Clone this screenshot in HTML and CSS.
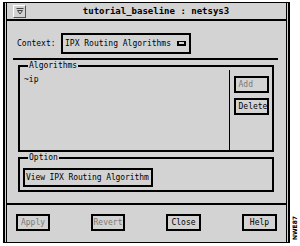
FILE: index.html
```html
<!DOCTYPE html>
<html lang="en">
<head>
    <meta charset="UTF-8">
    <title>tutorial_baseline : netsys3</title>
    <link rel="stylesheet" href="styles.css">
</head>
<body>
    <div class="screen">
        <div class="window">
            <div class="frame">
                <div class="titlebar">
                    <span class="menu-btn">
                        <svg width="8" height="7" viewBox="0 0 8 7">
                            <path d="M0.5 0.5 H7.5 M1.5 2.5 H6.5 L4 6 Z" fill="none" stroke="#444" stroke-width="1"/>
                        </svg>
                    </span>
                    <span class="title">tutorial_baseline : netsys3</span>
                </div>

                <div class="client">
                    <div class="context-row">
                        <span class="label">Context:</span>
                        <div class="option-menu">
                            <span>IPX Routing Algorithms</span>
                            <span class="indicator"></span>
                        </div>
                    </div>

                    <div class="sep"></div>

                    <fieldset class="group algos">
                        <legend>Algorithms</legend>
                        <div class="group-body">
                            <div class="list">~ip</div>
                            <div class="side-btns">
                                <button class="btn" disabled>Add</button>
                                <button class="btn">Delete</button>
                            </div>
                        </div>
                    </fieldset>

                    <fieldset class="group option">
                        <legend>Option</legend>
                        <button class="btn wide">View IPX Routing Algorithm</button>
                    </fieldset>

                    <div class="sep full"></div>

                    <div class="actions">
                        <button class="btn" disabled>Apply</button>
                        <button class="btn" disabled>Revert</button>
                        <button class="btn wider">Close</button>
                        <button class="btn wider">Help</button>
                    </div>
                </div>
            </div>
        </div>
        <div class="fig-id">NWE87</div>
    </div>
</body>
</html>
```

FILE: styles.css
```css
body {
    margin: 0;
    padding: 0;
    background: #fff;
    font-family: "DejaVu Sans Mono", "Liberation Mono", monospace;
    font-size: 8px;
    color: #000;
}

.screen {
    width: 300px;
    height: 246px;
    display: flex;
    overflow: hidden;
}

.window {
    margin: 2px 0 0 3px;
    width: 287px;
    height: 241px;
    box-sizing: border-box;
    border: 1px solid #000;
    border-left-width: 2px;
    border-right-width: 2px;
    padding: 0 1px;
    background: #d3d3d3;
}

.frame {
    height: 100%;
    border-left: 1px solid #000;
    border-right: 1px solid #000;
    display: flex;
    flex-direction: column;
}

.titlebar {
    height: 16px;
    border-bottom: 2px solid #000;
    display: flex;
    align-items: center;
}

.menu-btn {
    width: 11px;
    height: 11px;
    margin-left: 6px;
    border: 1px solid;
    border-color: #fff #555 #555 #fff;
    display: flex;
    align-items: center;
    justify-content: center;
}

.title {
    flex: 1;
    text-align: center;
    font-weight: bold;
    font-size: 9px;
    line-height: 10px;
}

.client {
    flex: 1;
    display: flex;
    flex-direction: column;
}

.context-row {
    margin: 12px 0 0 10px;
    display: flex;
    align-items: center;
}

.label {
    width: 44px;
    line-height: 10px;
}

.option-menu {
    width: 130px;
    height: 21px;
    box-sizing: border-box;
    border: 2px solid #000;
    padding: 0 3px 0 2px;
    display: flex;
    align-items: center;
    justify-content: space-between;
    line-height: 10px;
}

.indicator {
    width: 9px;
    height: 5px;
    box-sizing: border-box;
    border: 2px solid #000;
    border-top-width: 1px;
}

.sep {
    height: 2px;
    background: #000;
    margin: 4px 8px 0 6px;
}

.group {
    margin: 1px 0 0 11px;
    padding: 0;
    width: 256px;
    box-sizing: border-box;
    min-width: 0;
    border: 2px solid #000;
}

.group legend {
    margin-left: 8px;
    padding: 0 1px;
    line-height: 9px;
}

.group-body {
    height: 80px;
    display: flex;
}

.list {
    flex: 1;
    border-right: 1px solid #000;
    padding: 5px 0 0 4px;
    line-height: 10px;
}

.side-btns {
    width: 42px;
    display: flex;
    flex-direction: column;
    align-items: center;
    gap: 5px;
    padding-top: 6px;
}

.btn {
    width: 34px;
    height: 17px;
    box-sizing: border-box;
    border: 2px solid #000;
    background: #d3d3d3;
    font-family: inherit;
    font-size: 8px;
    line-height: 10px;
    color: #000;
    padding: 0;
    white-space: nowrap;
}

.btn:disabled {
    color: #7a7a7a;
}

.side-btns .btn {
    width: 35px;
    text-align: left;
    padding-left: 3px;
}

.option {
    margin-top: 1px;
}

.btn.wide {
    width: 130px;
    height: 19px;
    margin: 6px 0 3px 3px;
    text-align: left;
    padding-left: 1px;
    letter-spacing: -0.1px;
}

.sep.full {
    margin: 11px 0 0 0;
}

.actions {
    margin-top: 9px;
    padding: 0 9px 0 9px;
    display: flex;
    justify-content: space-between;
}

.btn.wider {
    width: 35px;
}

.fig-id {
    writing-mode: vertical-rl;
    transform: rotate(180deg);
    align-self: flex-end;
    margin: 0 0 6px 1px;
    font-family: "DejaVu Sans", sans-serif;
    font-size: 6px;
    font-weight: bold;
    line-height: 7px;
}
```
